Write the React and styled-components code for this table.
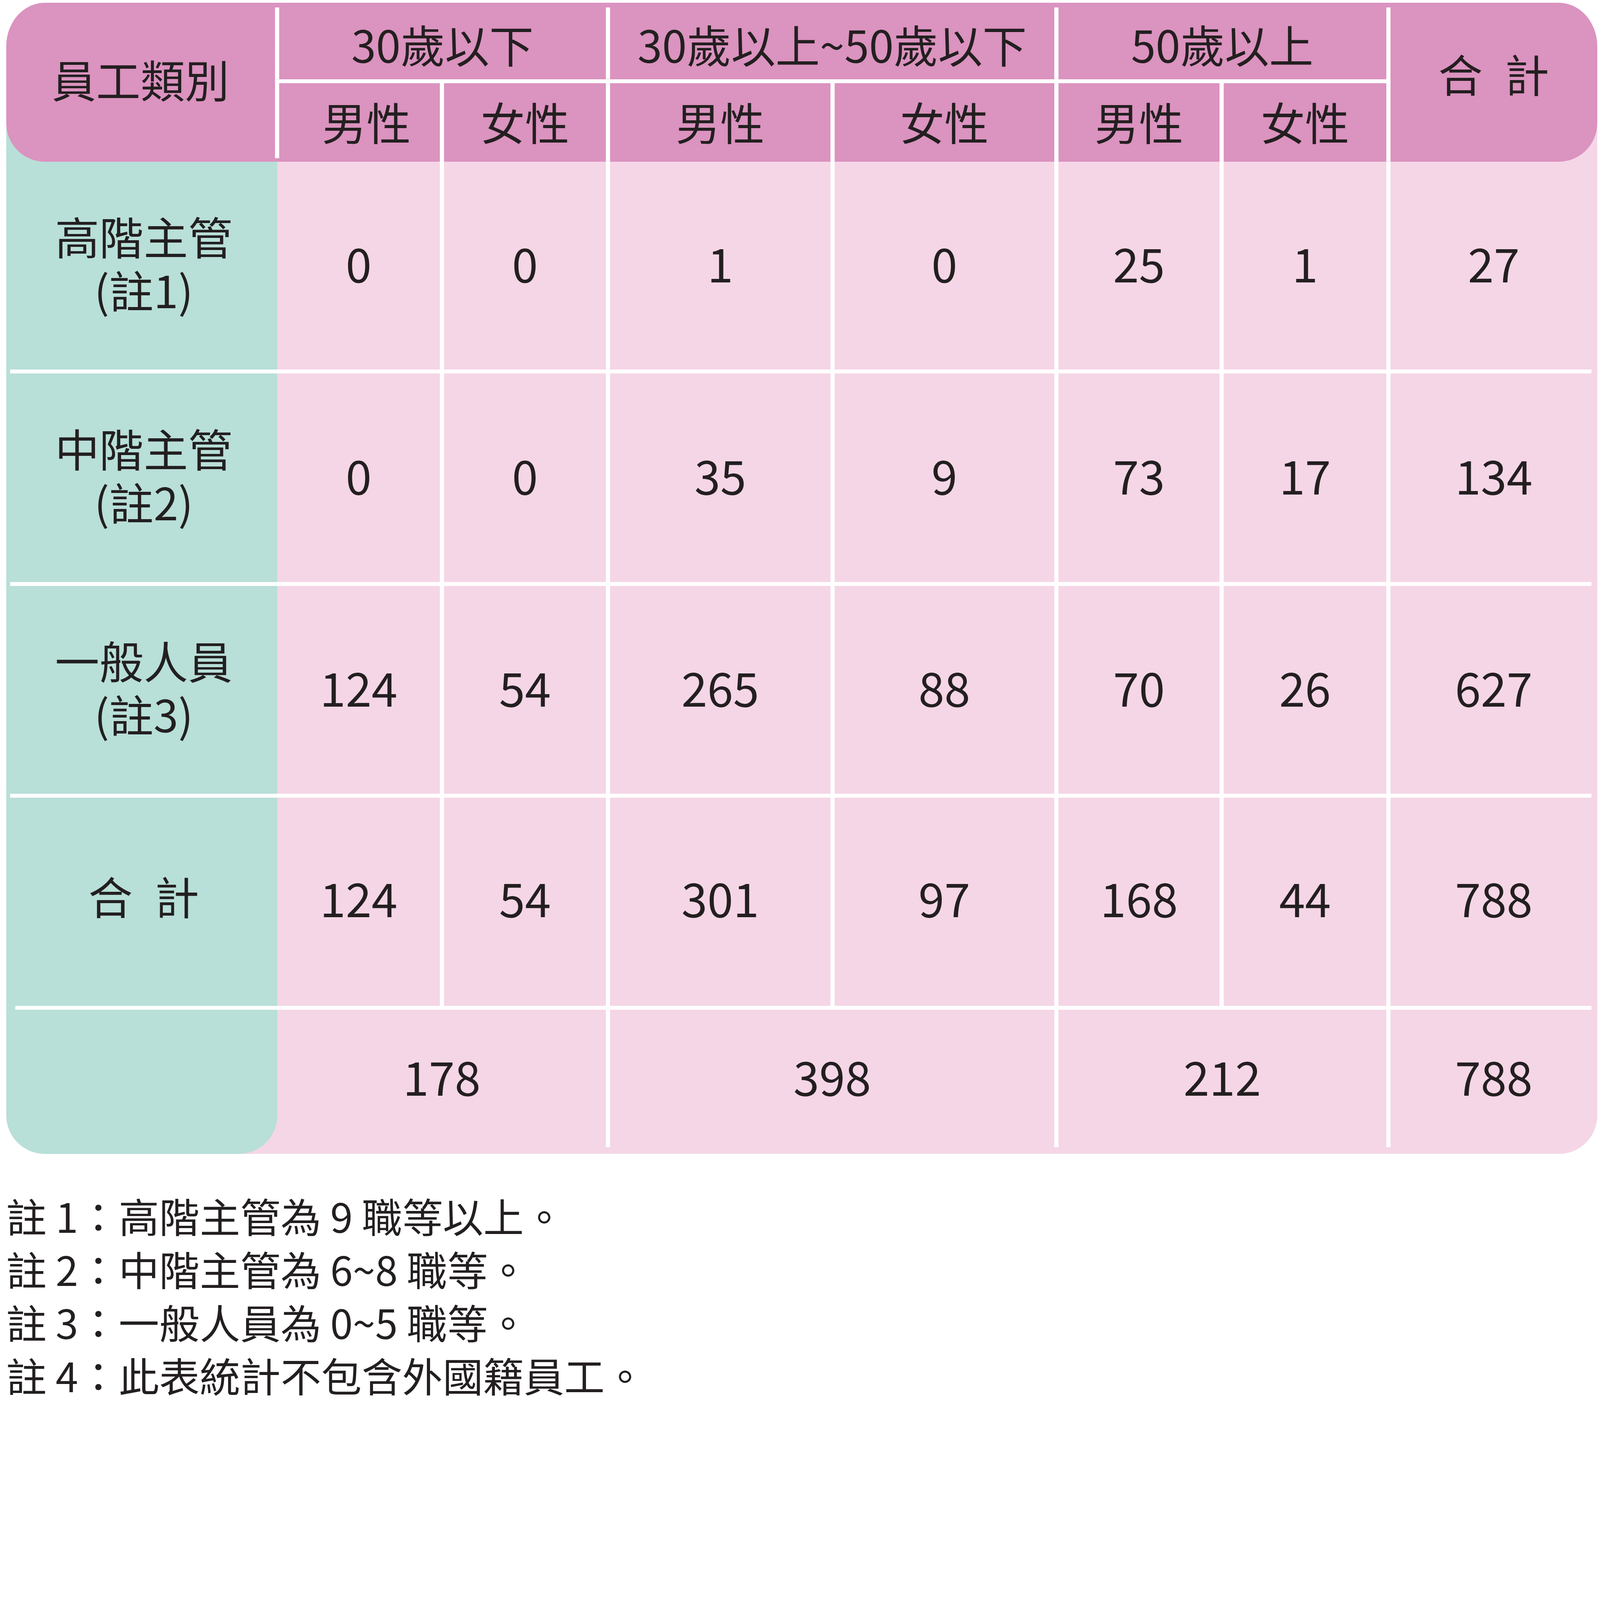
import React from 'react';
import styled, { createGlobalStyle } from 'styled-components';

/* All measurements below are taken in reference-image pixels and scaled by K
   (the page is photographed at a device pixel ratio of about 1.215). */
const K = 0.823;
const s = (v) => `${(v * K).toFixed(2)}px`;

const HEADER = '#db93bf';
const BODY = '#f5d6e6';
const TEAL = '#b8dfd8';
const INK = '#231f20';
const LINE = 13;
const COLS = [844, 505, 517, 698, 696, 515, 518, 656].map(s).join(' ');
const HEAD_COLS = [836, 513, 517, 698, 696, 515, 518, 656].map(s).join(' ');

const lineBg = (top = 0, bottom = 0) =>
  `linear-gradient(#fff, #fff) 0 ${s(top)} / ${s(LINE)} calc(100% - ${s(top + bottom)}) no-repeat`;

const GlobalStyle = createGlobalStyle`
  html, body { margin: 0; padding: 0; background: #fff; }
  body {
    font-family: "Noto Sans CJK TC", "Noto Sans", sans-serif;
    color: ${INK};
  }
`;

const Page = styled.div`
  width: ${s(4982)};
  box-sizing: border-box;
  padding: ${s(8)} 0 0 ${s(19)};
`;

const Table = styled.div`
  width: ${s(4949)};
`;

const Header = styled.div`
  position: relative;
  z-index: 1;
  display: grid;
  grid-template-columns: ${HEAD_COLS};
  grid-template-rows: ${s(239)} ${s(12)} ${s(244)};
  background: ${HEADER};
  border-radius: ${s(120)} / ${s(135)} ${s(135)} ${s(120)} ${s(120)};
`;

const HeadCell = styled.div`
  grid-column: ${(p) => p.$col};
  grid-row: ${(p) => p.$row};
  display: flex;
  align-items: center;
  justify-content: center;
  box-sizing: border-box;
  padding: ${(p) => s(p.$pt || 0)} 0 ${(p) => s(p.$pb || 0)} ${(p) => s((p.$line ? LINE : 0) + (p.$pl || 0))};
  background: ${(p) => (p.$line ? lineBg(p.$lt, p.$lb) : 'none')};
  font-size: ${s(138)};
  line-height: 1;
  white-space: nowrap;
`;

const HeadRule = styled.div`
  grid-column: 2 / 8;
  grid-row: 2;
  background: #fff;
`;

const Body = styled.div`
  display: grid;
  grid-template-columns: ${COLS};
  grid-template-rows: ${[647, 12, 649, 12, 646, 12, 648, 12, 448].map(s).join(' ')};
  margin-top: ${s(-103)};
  padding-top: ${s(103)};
  background: linear-gradient(to right, ${TEAL} ${s(844)}, ${BODY} ${s(844)}) top / 100% ${s(103)} no-repeat,
    ${BODY};
  border-radius: 0 0 ${s(120)} ${s(120)};
  overflow: hidden;
`;

const CatCell = styled.div`
  display: flex;
  flex-direction: column;
  align-items: center;
  justify-content: center;
  gap: ${s(29)};
  padding: 0 0 ${(p) => s(p.$pb ?? 22)} ${s(12)};
  background: ${TEAL};
  border-radius: ${(p) => (p.$round ? `0 0 ${s(120)} ${s(120)}` : '0')};
  font-size: ${s(138)};
  line-height: 1;
  white-space: nowrap;
`;

const CatLine = styled.span`
  display: block;
`;

const NumCell = styled.div`
  grid-column: span ${(p) => p.$span || 1};
  display: flex;
  align-items: center;
  justify-content: center;
  box-sizing: border-box;
  padding: 0 0 ${(p) => s(p.$pb ?? 20)} ${(p) => s(p.$line ? LINE : 0)};
  background: ${(p) => (p.$line ? `${lineBg(0, p.$lb)}, ${BODY}` : BODY)};
  font-size: ${s(145)};
  line-height: 1;
`;

const Rule = styled.div`
  grid-column: 1 / -1;
  background: linear-gradient(#fff, #fff) ${(p) => s(p.$left)} 0 / calc(100% - ${(p) => s(p.$left + 18)}) 100%
      no-repeat,
    linear-gradient(to right, ${TEAL} ${s(844)}, ${BODY} ${s(844)});
`;

const Notes = styled.div`
  margin-top: ${s(110)};
  font-size: ${s(126)};
  line-height: ${s(165)};
`;

const Note = styled.p`
  margin: 0;
  white-space: pre;
`;

const rows = [
  { label: ['高階主管', '(註1)'], vals: [0, 0, 1, 0, 25, 1, 27] },
  { label: ['中階主管', '(註2)'], vals: [0, 0, 35, 9, 73, 17, 134] },
  { label: ['一般人員', '(註3)'], vals: [124, 54, 265, 88, 70, 26, 627] },
  { label: ['合\u2002計'], vals: [124, 54, 301, 97, 168, 44, 788], pb: 40, numPb: 28 },
];

const totals = [
  { v: 178, span: 2, line: false },
  { v: 398, span: 2, line: true },
  { v: 212, span: 2, line: true },
  { v: 788, span: 1, line: true },
];

const notes = [
  '註 1：高階主管為 9 職等以上。',
  '註 2：中階主管為 6~8 職等。',
  '註 3：一般人員為 0~5 職等。',
  '註 4：此表統計不包含外國籍員工。',
];

const subs = ['男性', '女性', '男性', '女性', '男性', '女性'];

export default function App() {
  return (
    <>
      <GlobalStyle />
      <Page>
        <Table>
          <Header>
            <HeadCell $col="1" $row="1 / 4" $pb={22}>員工類別</HeadCell>
            <HeadCell $col="2 / 4" $row="1" $line $lt={15} $pt={16}>30歲以下</HeadCell>
            <HeadCell $col="4 / 6" $row="1" $line $lt={15} $pt={16}>30歲以上~50歲以下</HeadCell>
            <HeadCell $col="6 / 8" $row="1" $line $lt={15} $pt={16}>50歲以上</HeadCell>
            <HeadCell $col="8" $row="1 / 4" $line $lt={15} $pb={56}>合{'\u2002'}計</HeadCell>
            <HeadRule />
            {subs.map((t, i) => (
              <HeadCell
                key={i}
                $col={`${i + 2}`}
                $row="3"
                $line
                $lb={i === 0 ? 11 : 0}
                $pl={i === 0 ? 44 : 0}
                $pb={10}
              >
                {t}
              </HeadCell>
            ))}
          </Header>
          <Body>
            {rows.map((r, ri) => (
              <React.Fragment key={ri}>
                <CatCell $pb={r.pb}>
                  {r.label.map((l) => (
                    <CatLine key={l}>{l}</CatLine>
                  ))}
                </CatCell>
                {r.vals.map((v, i) => (
                  <NumCell key={i} $line={i > 0} $pb={r.numPb}>{v}</NumCell>
                ))}
                <Rule $left={ri === 3 ? 28 : 12} />
              </React.Fragment>
            ))}
            <CatCell $round />
            {totals.map((t, i) => (
              <NumCell key={i} $span={t.span} $line={t.line} $lb={21} $pb={38}>{t.v}</NumCell>
            ))}
          </Body>
        </Table>
        <Notes>
          {notes.map((n) => (
            <Note key={n}>{n}</Note>
          ))}
        </Notes>
      </Page>
    </>
  );
}
